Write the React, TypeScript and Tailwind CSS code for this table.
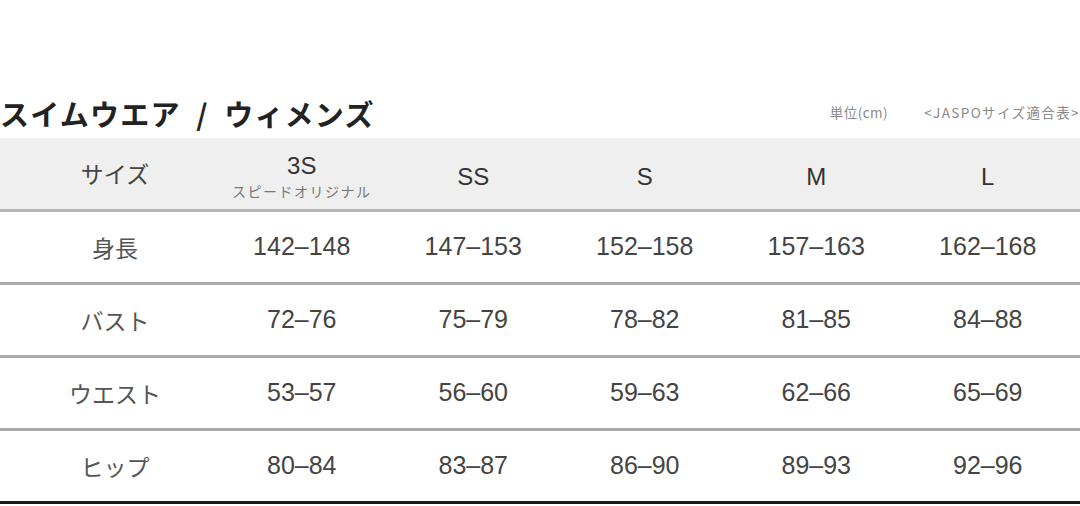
import React from "react";

const cols = ["3S", "SS", "S", "M", "L"];
const rows: { label: string; values: string[] }[] = [
  { label: "身長", values: ["142–148", "147–153", "152–158", "157–163", "162–168"] },
  { label: "バスト", values: ["72–76", "75–79", "78–82", "81–85", "84–88"] },
  { label: "ウエスト", values: ["53–57", "56–60", "59–63", "62–66", "65–69"] },
  { label: "ヒップ", values: ["80–84", "83–87", "86–90", "89–93", "92–96"] },
];

const jp = "font-['Noto_Sans_CJK_JP',sans-serif]";
const num = "font-['Liberation_Sans','Noto_Sans_CJK_JP',sans-serif]";

export default function App() {
  return (
    <div className="w-[1080px] h-[506px] overflow-hidden bg-white">
      <div className="flex items-end justify-between h-[138px] pb-[10px]">
        <div className={`${jp} font-bold text-[29px] leading-none text-[#222] tracking-[1.2px] whitespace-pre`}>
          {"スイムウエア  /  ウィメンズ"}
        </div>
        <div className={`flex items-center gap-[36px] ${jp} text-[13.5px] leading-none text-[#888] mb-[9px] whitespace-nowrap`}>
          <span className="tracking-[0.5px]">単位(cm)</span>
          <span className="tracking-[1.4px]">&lt;JASPOサイズ適合表&gt;</span>
        </div>
      </div>
      <div className="flex h-[74px] bg-[#efefef] border-b-[3px] border-[#b5b5b5]">
        <div className={`w-[216px] pl-[14px] flex items-center justify-center ${jp} text-[23px] text-[#444]`}>
          サイズ
        </div>
        {cols.map((c, i) => (
          <div key={c} className="w-[171.5px] flex flex-col items-center justify-center">
            <div className={`${num} text-[24px] leading-none text-[#333] ${i === 0 ? "mt-[4px]" : "mt-[6px]"}`}>{c}</div>
            {i === 0 && (
              <div className={`${jp} text-[14px] leading-none text-[#777] mt-[6px] tracking-[1.5px]`}>
                スピードオリジナル
              </div>
            )}
          </div>
        ))}
      </div>
      {rows.map((r, ri) => (
        <div
          key={r.label}
          className={`flex h-[73px] ${ri === rows.length - 1 ? "border-b-[3px] border-[#1a1a1a]" : "border-b-[3px] border-[#aaaaaa]"}`}
        >
          <div className={`w-[216px] pl-[14px] flex items-center justify-center ${jp} text-[23px] text-[#555]`}>
            {r.label}
          </div>
          {r.values.map((v, i) => (
            <div key={i} className={`w-[171.5px] flex items-center justify-center ${num} text-[25px] text-[#444]`}>
              {v}
            </div>
          ))}
        </div>
      ))}
    </div>
  );
}
